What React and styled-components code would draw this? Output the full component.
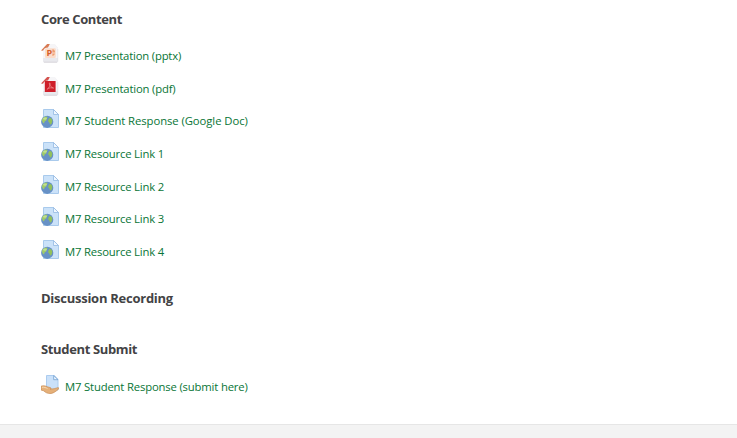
import React from 'react';
import styled, { createGlobalStyle } from 'styled-components';

const GlobalStyle = createGlobalStyle`
  * { box-sizing: border-box; }
  body { margin: 0; background: #fff; font-family: "Open Sans", "Noto Sans", sans-serif; }
`;

const Page = styled.div`
  display: flex;
  flex-direction: column;
  height: 438px;
  overflow: hidden;
`;

const Content = styled.main`
  flex: 1;
  padding: 9px 41px 0;
`;

const Section = styled.section`
  margin-bottom: ${(p) => p.$gap || 0}px;
`;

const Heading = styled.h3`
  margin: 0;
  height: 20px;
  line-height: 20px;
  font-size: 13px;
  font-weight: 700;
  letter-spacing: ${(p) => p.$tracking || 0}px;
  color: #434345;
  white-space: nowrap;
`;

const List = styled.ul`
  list-style: none;
  margin: 0;
  padding: ${(p) => p.$top}px 0 0;
`;

const Item = styled.li`
  display: flex;
  align-items: flex-start;
  height: 32.67px;
  padding-top: 4px;
`;

const Icon = styled.svg`
  width: 18px;
  height: 20px;
  flex: none;
  margin-right: 6px;
`;

const Link = styled.a`
  margin-top: 3px;
  line-height: 18px;
  font-size: 11.3px;
  letter-spacing: ${(p) => p.$tracking || 0}px;
  color: #087536;
  text-decoration: none;
  white-space: nowrap;
`;

const Footer = styled.footer`
  height: 14px;
  background: #f3f3f3;
  border-top: 1px solid #e6e6e6;
`;

function PaperBack({ fold }) {
  return (
    <>
      <path d="M5 .5h9l3 3.5v13.5a1 1 0 0 1-1 1H3a1 1 0 0 1-1-1V5z" fill="#e9e9ed" />
      <path d="M5 .5h9l3 3.5v10H2V5z" fill="#f6f5f7" />
      <path d="M0 6.5 6.2 0h2.6L7 3.4C4.6 3.4 2.8 4.5 2 6.8z" fill={fold} />
      <path d="M3 18.2h13" stroke="#d3d1d5" strokeWidth=".8" />
      <path d="M16.8 5v12.5" stroke="#dedce0" strokeWidth=".6" />
    </>
  );
}

function PresentationIcon() {
  return (
    <Icon viewBox="0 0 18 20">
      <PaperBack fold="#d97a52" />
      <rect x="4" y="4.3" width="10.8" height="9.7" rx="1" fill="#fbdcca" />
      <path d="M11.4 5.3a3.2 3.2 0 0 1 2.7 3.2h-2.7zM11.4 9.6h2.6a3.2 3.2 0 0 1-2.6 2.4z" fill="#ef9d70" />
      <text x="5.4" y="12.2" fontFamily="Open Sans" fontSize="9" fontWeight="700" fill="#d65e2b">P</text>
    </Icon>
  );
}

function PdfIcon() {
  return (
    <Icon viewBox="0 0 18 20">
      <PaperBack fold="#d4524e" />
      <rect x="3.8" y="4" width="10.8" height="11" fill="#cf1f2a" />
      <path d="M5.8 12.6c2-1.3 3.7-4 3.2-6.4-.2-.7-.9-.3-.6.6.5 2 2 3.8 4.2 4.2M6.6 11.7c2-.9 4-1.2 6-.5" fill="none" stroke="#ec8c8c" strokeWidth=".8" />
    </Icon>
  );
}

function GlobeIcon() {
  return (
    <Icon viewBox="0 0 18 20">
      <path d="M2.5.5h10l5 5v13h-15z" fill="#cbe2f9" stroke="#a9caec" />
      <path d="M12.5.5v5h5z" fill="#f0f7ff" stroke="#94b9e2" strokeWidth=".8" />
      <circle cx="6.2" cy="12.8" r="6.1" fill="#6791c6" />
      <path d="M.9 11C1.7 8.7 3.5 7.4 5.6 7.4l1 1.3-1.5 1.2.4 1.4-1.9 1.3-.6 1.8-1.5-1.2z" fill="#a1cc66" />
      <path d="m8.3 9.1 1.9.1 1.2 2.3-.7 2.9-1.6 1.3-.8-2.1-1.2-1.3.3-1.6z" fill="#92c15b" />
      <ellipse cx="4" cy="9.6" rx="2" ry="1.2" fill="#cbe59a" opacity=".8" />
    </Icon>
  );
}

function SubmitIcon() {
  return (
    <Icon viewBox="0 0 18 20">
      <path d="M5.5.5h7.7l3.8 4V15H5.5z" fill="#cae1fa" stroke="#acccef" />
      <path d="M12.7.5v4.2H17z" fill="#edf6ff" stroke="#719fd1" strokeWidth=".8" />
      <path d="M0 11.2c2.2-.5 4.2-.6 6 .5l3.5 1c1 .4.7 1.5-.4 1.5 3-.2 5.2-.6 7.7-1.5 1.3-.3 1.5.8.6 1.5-2.1 1.8-4.3 3.7-7.4 4.3-3.5.2-5.6-1-7.3-2.7L0 15z" fill="#e5b079" stroke="#c98d55" strokeWidth=".7" />
      <path d="M1 12.3c2.3-.4 4 .5 5.5 1.2" fill="none" stroke="#f7d9b3" />
    </Icon>
  );
}

const resources = [
  { label: 'M7 Presentation (pptx)', icon: PresentationIcon, tracking: -0.19 },
  { label: 'M7 Presentation (pdf)', icon: PdfIcon, tracking: -0.17 },
  { label: 'M7 Student Response (Google Doc)', icon: GlobeIcon, tracking: -0.07 },
  { label: 'M7 Resource Link 1', icon: GlobeIcon, tracking: -0.18 },
  { label: 'M7 Resource Link 2', icon: GlobeIcon, tracking: -0.18 },
  { label: 'M7 Resource Link 3', icon: GlobeIcon, tracking: -0.18 },
  { label: 'M7 Resource Link 4', icon: GlobeIcon, tracking: -0.18 },
];

const submissions = [
  { label: 'M7 Student Response (submit here)', icon: SubmitIcon, tracking: -0.17 },
];

function ResourceList({ items, top }) {
  return (
    <List $top={top}>
      {items.map(({ label, icon: Glyph, tracking }) => (
        <Item key={label}>
          <Glyph />
          <Link $tracking={tracking}>{label}</Link>
        </Item>
      ))}
    </List>
  );
}

export default function App() {
  return (
    <Page>
      <GlobalStyle />
      <Content>
        <Section $gap={19}>
          <Heading $tracking={-0.4}>Core Content</Heading>
          <ResourceList items={resources} top={11} />
        </Section>
        <Section $gap={31}>
          <Heading $tracking={-0.26}>Discussion Recording</Heading>
        </Section>
        <Section>
          <Heading $tracking={-0.36}>Student Submit</Heading>
          <ResourceList items={submissions} top={12} />
        </Section>
      </Content>
      <Footer />
    </Page>
  );
}
